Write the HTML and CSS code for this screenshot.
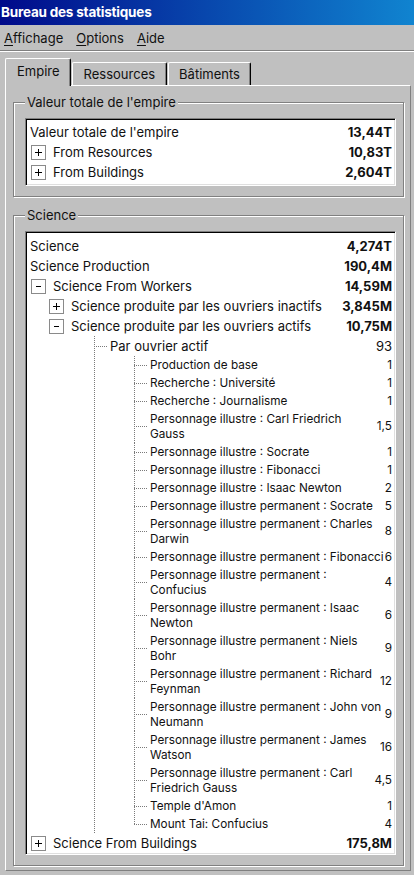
FILE: index.html
```html
<!DOCTYPE html>
<html lang="fr">
<head>
  <meta charset="UTF-8">
  <meta name="viewport" content="width=device-width, initial-scale=1.0">
  <title>Bureau des statistiques</title>
  <link rel="stylesheet" href="styles.css">
</head>
<body>
  <div class="titlebar">Bureau des statistiques</div>
  <div class="menubar">
    <span class="menu-item"><u>A</u>ffichage</span>
    <span class="menu-item"><u>O</u>ptions</span>
    <span class="menu-item"><u>A</u>ide</span>
  </div>
  <div class="tabs">
    <div class="tab active">Empire</div>
    <div class="tab">Ressources</div>
    <div class="tab">Bâtiments</div>
  </div>
  <div class="panel">
    <fieldset class="group">
      <legend>Valeur totale de l'empire</legend>
      <div class="listbox first">
        <div class="row"><span class="label">Valeur totale de l'empire</span><span class="value">13,44T</span></div>
        <div class="row">
          <svg class="exp" viewBox="0 0 15 15"><rect x=".5" y=".5" width="14" height="14"/><path d="M4 7.5h7M7.5 4v7"/></svg>
          <span class="label">From Resources</span><span class="value">10,83T</span>
        </div>
        <div class="row">
          <svg class="exp" viewBox="0 0 15 15"><rect x=".5" y=".5" width="14" height="14"/><path d="M4 7.5h7M7.5 4v7"/></svg>
          <span class="label">From Buildings</span><span class="value">2,604T</span>
        </div>
      </div>
    </fieldset>

    <fieldset class="group">
      <legend>Science</legend>
      <div class="listbox tree">
        <div class="row"><span class="label">Science</span><span class="value">4,274T</span></div>
        <div class="row"><span class="label">Science Production</span><span class="value">190,4M</span></div>
        <div class="row">
          <svg class="exp" viewBox="0 0 15 15"><rect x=".5" y=".5" width="14" height="14"/><path d="M5 7.5h5"/></svg>
          <span class="label">Science From Workers</span><span class="value">14,59M</span>
        </div>
        <div class="row l1">
          <svg class="exp" viewBox="0 0 15 15"><rect x=".5" y=".5" width="14" height="14"/><path d="M4 7.5h7M7.5 4v7"/></svg>
          <span class="label">Science produite par les ouvriers inactifs</span><span class="value">3,845M</span>
        </div>
        <div class="row l1">
          <svg class="exp" viewBox="0 0 15 15"><rect x=".5" y=".5" width="14" height="14"/><path d="M5 7.5h5"/></svg>
          <span class="label">Science produite par les ouvriers actifs</span><span class="value">10,75M</span>
        </div>

        <div class="branch">
          <div class="row sub"><span class="conn"></span><span class="label">Par ouvrier actif</span><span class="value plain">93</span></div>
          <div class="leaves">
            <div class="leaf"><span class="conn"></span><span class="label">Production de base</span><span class="value">1</span></div>
            <div class="leaf"><span class="conn"></span><span class="label">Recherche : Université</span><span class="value">1</span></div>
            <div class="leaf"><span class="conn"></span><span class="label">Recherche : Journalisme</span><span class="value">1</span></div>
            <div class="leaf"><span class="conn"></span><span class="label">Personnage illustre : Carl Friedrich Gauss</span><span class="value">1,5</span></div>
            <div class="leaf"><span class="conn"></span><span class="label">Personnage illustre : Socrate</span><span class="value">1</span></div>
            <div class="leaf"><span class="conn"></span><span class="label">Personnage illustre : Fibonacci</span><span class="value">1</span></div>
            <div class="leaf"><span class="conn"></span><span class="label">Personnage illustre : Isaac Newton</span><span class="value">2</span></div>
            <div class="leaf"><span class="conn"></span><span class="label">Personnage illustre permanent : Socrate</span><span class="value">5</span></div>
            <div class="leaf"><span class="conn"></span><span class="label">Personnage illustre permanent : Charles Darwin</span><span class="value">8</span></div>
            <div class="leaf"><span class="conn"></span><span class="label">Personnage illustre permanent : Fibonacci</span><span class="value">6</span></div>
            <div class="leaf"><span class="conn"></span><span class="label">Personnage illustre permanent : Confucius</span><span class="value">4</span></div>
            <div class="leaf"><span class="conn"></span><span class="label">Personnage illustre permanent : Isaac Newton</span><span class="value">6</span></div>
            <div class="leaf"><span class="conn"></span><span class="label">Personnage illustre permanent : Niels Bohr</span><span class="value">9</span></div>
            <div class="leaf"><span class="conn"></span><span class="label">Personnage illustre permanent : Richard Feynman</span><span class="value">12</span></div>
            <div class="leaf"><span class="conn"></span><span class="label">Personnage illustre permanent : John von Neumann</span><span class="value">9</span></div>
            <div class="leaf"><span class="conn"></span><span class="label">Personnage illustre permanent : James Watson</span><span class="value">16</span></div>
            <div class="leaf"><span class="conn"></span><span class="label">Personnage illustre permanent : Carl Friedrich Gauss</span><span class="value">4,5</span></div>
            <div class="leaf"><span class="conn"></span><span class="label">Temple d'Amon</span><span class="value">1</span></div>
            <div class="leaf last"><span class="conn"></span><span class="label">Mount Tai: Confucius</span><span class="value">4</span></div>
          </div>
        </div>

        <div class="row">
          <svg class="exp" viewBox="0 0 15 15"><rect x=".5" y=".5" width="14" height="14"/><path d="M4 7.5h7M7.5 4v7"/></svg>
          <span class="label">Science From Buildings</span><span class="value">175,8M</span>
        </div>
      </div>
    </fieldset>
  </div>
</body>
</html>
```

FILE: styles.css
```css
:root {
  --face: #c0c0c0;
  --shadow: #808080;
  --dark: #000;
  --light: #fff;
  --dots: #7a7a7a;
}
body {
  margin: 0;
  background-color: var(--face);
  color: #111;
  font-family: Inter, "Noto Sans", sans-serif;
  font-size: 13px;
}
.titlebar {
  height: 25px;
  line-height: 25px;
  padding-left: 1px;
  background: linear-gradient(to right, #000a8a, #1084d0);
  color: white;
  font-weight: bold;
  font-size: 13.5px;
  letter-spacing: -0.2px;
}
.menubar {
  display: flex;
  align-items: center;
  gap: 13px;
  height: 25px;
  padding-left: 4px;
  border-bottom: 1px solid var(--shadow);
  box-shadow: 0 1px var(--light);
}
.menu-item u {
  text-decoration-thickness: 1px;
  text-underline-offset: 2px;
}
.tabs {
  display: flex;
  align-items: flex-end;
  gap: 1px;
  padding: 7px 0 0 5px;
}
.tab {
  height: 22px;
  line-height: 22px;
  padding: 0 10.5px;
  border-top: 1px solid var(--light);
  border-left: 1px solid var(--light);
  border-right: 1px solid var(--dark);
  border-radius: 2px 2px 0 0;
  box-shadow: inset -1px 0 var(--shadow);
}
.tab.active {
  position: relative;
  z-index: 1;
  height: 26px;
  line-height: 25px;
  margin-bottom: -1px;
  padding: 0 10.5px 1px 11px;
  background-color: var(--face);
}
.panel {
  margin: 0 3px 0 5px;
  padding: 0 6px 4px 7px;
  border-top: 1px solid var(--light);
  border-left: 1px solid var(--light);
  border-right: 1px solid var(--shadow);
  border-bottom: 1px solid var(--shadow);
}
.group {
  margin: 10px 0 0;
  padding: 8px 7px 10px 11px;
  border: 1px solid var(--shadow);
  box-shadow: inset 1px 1px var(--light), 1px 1px var(--light);
}
.panel .group:first-child {
  margin-top: 8px;
}
.group legend {
  padding: 0 2px;
  line-height: 16px;
  background-color: var(--face);
}
.listbox {
  background: white;
  border: 1px solid;
  border-color: var(--shadow) var(--light) var(--light) var(--shadow);
  box-shadow: inset 1px 1px var(--dark), inset -1px -1px #dfdfdf;
  padding: 3px 0;
}
.listbox.tree {
  padding: 4px 0 1px;
}
.row {
  display: flex;
  align-items: center;
  height: 20px;
  padding: 0 3px 0 4px;
}
.row.l1 {
  padding-left: 22px;
}
.label {
  flex: 1;
  min-width: 0;
}
.value {
  flex: none;
  margin-left: 2px;
  text-align: right;
  font-weight: bold;
}
.value.plain,
.leaf .value {
  font-weight: normal;
}
.exp {
  flex: none;
  width: 15px;
  height: 15px;
  margin: 0 7px 0 1px;
}
.exp rect {
  fill: white;
  stroke: #8a8a8a;
}
.exp path {
  stroke: #000;
  fill: none;
}
.branch {
  margin-left: 68px;
  background: repeating-linear-gradient(to bottom, var(--dots) 0 1px, transparent 1px 2px) 0 0 / 1px 100% no-repeat;
}
.row.sub {
  padding-left: 0;
}
.conn {
  flex: none;
  align-self: stretch;
  width: 14px;
  margin-right: 2px;
  background: repeating-linear-gradient(to right, var(--dots) 0 1px, transparent 1px 2px) 0 50% / 100% 1px no-repeat;
}
.leaves {
  margin-left: 40px;
}
.leaf {
  display: flex;
  padding: 1.5px 3px 1.5px 0;
  font-size: 11.75px;
  line-height: 15px;
}
.leaf .conn {
  margin: -1.5px 2px -1.5px 0;
  background:
    repeating-linear-gradient(to right, var(--dots) 0 1px, transparent 1px 2px) 0 50% / 100% 1px no-repeat,
    repeating-linear-gradient(to bottom, var(--dots) 0 1px, transparent 1px 2px) 0 0 / 1px 100% no-repeat;
}
.leaf.last .conn {
  background:
    repeating-linear-gradient(to right, var(--dots) 0 1px, transparent 1px 2px) 0 50% / 100% 1px no-repeat,
    repeating-linear-gradient(to bottom, var(--dots) 0 1px, transparent 1px 2px) 0 0 / 1px 50% no-repeat;
}
.leaf .value {
  align-self: center;
  margin-left: 1px;
}
```
